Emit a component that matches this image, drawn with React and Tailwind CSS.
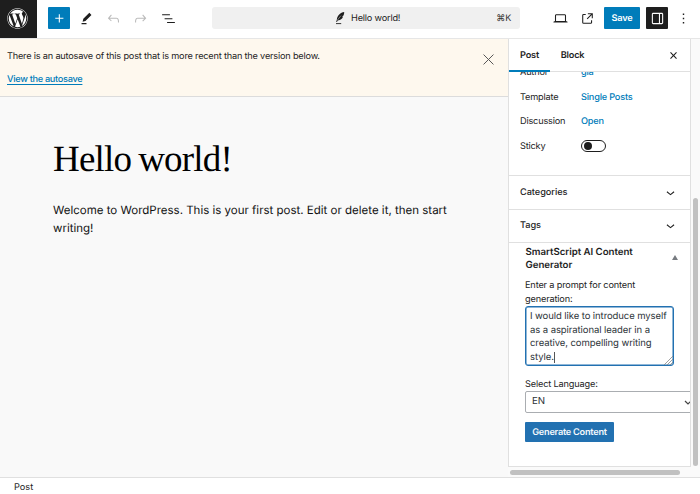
import React from "react";
import { FaWordpress } from "react-icons/fa";

const PATHS = {
  plus: "M11 12.5V17.5H12.5V12.5H17.5V11H12.5V6H11V11H6V12.5H11Z",
  edit: "m19 7-3-3-8.5 8.5-1 4 4-1L19 7Zm-7 11.5H5V20h7v-1.5Z",
  undo: "M18.3 11.7c-.6-.6-1.4-.9-2.3-.9H6.7l2.9-3.3-1.1-1-4.5 5L8.5 16l1-1-2.7-2.7H16c.5 0 .9.2 1.3.5 1 1 1 3.4 1 4.5v.3h1.5v-.2c0-1.5 0-4.3-1.5-5.7z",
  redo: "M15.6 6.5l-1.1 1 2.9 3.3H8c-.9 0-1.7.3-2.3.9-1.4 1.5-1.4 4.2-1.4 5.6v.2h1.5v-.3c0-1.1 0-3.5 1-4.5.3-.3.7-.5 1.3-.5h9.2L14.5 15l1.1 1.1 4.6-4.6-4.6-5z",
  list: "M3 6h11v1.5H3V6Zm3.5 5.5h11V13h-11v-1.5ZM21 17H10v1.5h11V17Z",
  external: "M19.5 4.5h-7V6h4.44l-5.97 5.97 1.06 1.06L18 7.06v4.44h1.5v-7Zm-13 1a2 2 0 0 0-2 2v10a2 2 0 0 0 2 2h10a2 2 0 0 0 2-2v-3H17v3a.5.5 0 0 1-.5.5h-10a.5.5 0 0 1-.5-.5v-10a.5.5 0 0 1 .5-.5h3V5.5h-3Z",
  desktop: "M20.5 16h-.7V8c0-1.1-.9-2-2-2H6.2c-1.1 0-2 .9-2 2v8h-.7c-.8 0-1.5.7-1.5 1.5h20c0-.8-.7-1.5-1.5-1.5zM5.7 8c0-.3.2-.5.5-.5h11.6c.3 0 .5.2.5.5v7.6H5.7V8z",
  drawer: "M18 4H6c-1.1 0-2 .9-2 2v12c0 1.1.9 2 2 2h12c1.1 0 2-.9 2-2V6c0-1.1-.9-2-2-2zm-4 14.5H6c-.3 0-.5-.2-.5-.5V6c0-.3.2-.5.5-.5h8v13zm4.5-.5c0 .3-.2.5-.5.5h-2.5v-13H18c.3 0 .5.2.5.5v12z",
  more: "M13 19h-2v-2h2v2zm0-6h-2v-2h2v2zm0-6h-2V5h2v2z",
  chevron: "M17.5 11.6L12 16l-5.5-4.4.9-1.2L12 14l4.5-3.6 1 1.2z",
  close: "M12 13.06l3.712 3.713 1.061-1.06L13.061 12l3.712-3.712-1.06-1.06L12 10.938 8.288 7.227l-1.061 1.06L10.939 12l-3.712 3.712 1.06 1.061L12 13.061z",
};

function Icon({ name, className = "" }) {
  return (
    <svg viewBox="0 0 24 24" fill="currentColor" fillRule="evenodd" className={"size-[17px] shrink-0 " + className}>
      <path d={PATHS[name]} />
    </svg>
  );
}

function Quill() {
  return (
    <svg viewBox="0 0 10 14" className="h-[14px] w-[10px] shrink-0">
      <path d="M9.2 1C5.5 1.6 2.2 4.6 1.9 8.2L1.2 11l.8.1.7-1.7C6 9.2 7.6 7.6 8 5.6L6.8 5.5 8.5 4.6C9 3.500 9.300 2.200 9.200 1Z" fill="#1e1e1e" />
      <path d="M2.2 9.300 6 4.600" stroke="#d5d5d5" strokeWidth=".5" />
      <path d="M1 12.600h5.200" stroke="#1e1e1e" strokeWidth=".9" />
    </svg>
  );
}

function Header() {
  return (
    <header className="flex h-[39px] shrink-0 border-b border-[#e6e6e6] bg-white">
      <div className="flex w-[37px] items-center justify-center bg-[#1e1e1e] text-white">
        <FaWordpress className="mb-[2px] -ml-[3px] size-[21px]" />
      </div>
      <div className="flex w-[175px] items-center pb-[2px] pl-[11px]">
        <div className="flex size-[22px] items-center justify-center rounded-[1px] bg-[#007cba] text-white">
          <Icon name="plus" />
        </div>
        <Icon name="edit" className="ml-[8px]" />
        <Icon name="undo" className="ml-[10px] text-[#bbb]" />
        <Icon name="redo" className="ml-[10px] text-[#bbb]" />
        <Icon name="list" className="ml-[11px]" />
      </div>
      <div className="mt-[7px] flex h-[22px] w-[308px] items-center rounded-[3px] bg-[#f0f0f0]">
        <div className="flex flex-1 items-center pl-[123px]">
          <Quill />
          <span className="ml-[6px] pt-px text-[9.200px]">Hello world!</span>
        </div>
        <span className="pr-[9px] pt-px text-[9px] text-[#2f2f2f]">⌘K</span>
      </div>
      <div className="flex flex-1 items-center pb-[2px] pl-[32px]">
        <Icon name="desktop" />
        <Icon name="external" className="ml-[10px]" />
        <div className="ml-[8px] flex h-[22px] w-[36px] items-center justify-center rounded-[1px] bg-[#007cba] pt-px text-[9.200px] font-semibold text-white">Save</div>
        <div className="ml-[6px] flex size-[22px] items-center justify-center rounded-[1px] bg-[#1e1e1e] text-white">
          <Icon name="drawer" />
        </div>
        <Icon name="more" className="ml-[7px]" />
      </div>
    </header>
  );
}

function Editor() {
  return (
    <main className="flex w-[508px] flex-col bg-[#f9f9f9]">
      <div className="flex h-[58px] justify-between border-b border-[#dcdcdc] bg-[#fef8ee] pl-[7px] pr-[11px]">
        <div className="pt-[11px] text-[9.200px] leading-[14px]">
          <p>There is an autosave of this post that is more recent than the version below.</p>
          <a className="mt-[9px] block font-medium tracking-[-0.300px] text-[#007cba] underline underline-offset-2">View the autosave</a>
        </div>
        <svg viewBox="0 0 10 10" className="mt-[15px] mr-[3px] size-[11px]">
          <path d="M.5.5l9 9M9.500.5l-9 9" stroke="#555" strokeWidth=".9" fill="none" />
        </svg>
      </div>
      <h1 className="mt-[40px] ml-[53px] whitespace-nowrap font-['Liberation_Serif',serif] text-[37px] leading-[46px] tracking-[-0.800px] text-black [word-spacing:-1.500px]">Hello world!</h1>
      <p className="mt-[18px] ml-[53px] text-[11.500px] leading-[18px] tracking-normal text-[#111]">
        Welcome to WordPress. This is your first post. Edit or delete it, then start
        <br />
        writing!
      </p>
    </main>
  );
}

function Row({ label, children }) {
  return (
    <div className="flex h-[24.500px] shrink-0 items-center pl-[11px]">
      <span className="w-[61px] pt-[2px]">{label}</span>
      <span className="pt-[2px] font-medium text-[#007cba]">{children}</span>
    </div>
  );
}

function Panel({ title }) {
  return (
    <div className="flex h-[33.500px] shrink-0 items-center justify-between border-t border-[#e0e0e0] pl-[11px] pr-[11px] font-medium tracking-[-0.050px]">
      <span className="pt-px">{title}</span>
      <Icon name="chevron" />
    </div>
  );
}

function Sidebar() {
  return (
    <aside className="flex h-[428px] w-[183px] flex-col overflow-hidden border-x border-b border-[#e0e0e0] bg-white text-[9.200px]">
      <div className="flex h-[33px] shrink-0 items-stretch border-b border-[#e0e0e0] font-semibold">
        <div className="-mb-px flex w-[41px] items-center justify-center border-b-2 border-b-[#007cba] pt-[2px]">Post</div>
        <div className="flex w-[45px] items-center justify-center pt-px">Block</div>
        <Icon name="close" className="mt-[8px] mr-[8px] ml-auto" />
      </div>
      <div className="flex h-[103px] shrink-0 flex-col justify-end overflow-hidden">
        <div className="flex h-[115px] shrink-0 flex-col">
          <Row label="Author">gia</Row>
          <Row label="Template">Single Posts</Row>
          <Row label="Discussion">Open</Row>
          <Row label="Sticky">
            <span className="-mt-[2px] flex h-[12px] w-[25px] items-center rounded-full border border-[#1e1e1e] pl-[2px]">
              <span className="size-[8px] rounded-full bg-[#1e1e1e]" />
            </span>
          </Row>
        </div>
      </div>
      <Panel title="Categories" />
      <Panel title="Tags" />
      <section className="flex-1 border-t border-[#e0e0e0] pl-[16px] tracking-[-0.160px]">
        <div className="flex items-center justify-between pt-[3px] pr-[12px]">
          <h2 className="pl-[0.500px] text-[9.700px] leading-[13px] font-semibold tracking-[-0.030px]">
            SmartScript AI Content
            <br />
            Generator
          </h2>
          <svg viewBox="0 0 6 5" className="mb-[4px] h-[5px] w-[6px]">
            <path d="M3 0 6 5H0Z" fill="#777b80" />
          </svg>
        </div>
        <p className="mt-[7px] leading-[14px]">
          Enter a prompt for content
          <br />
          generation:
        </p>
        <div className="relative -mt-px h-[60px] w-[149px] rounded-[3px] border border-[#2271b1] bg-white pt-[3px] pl-[4px] text-[9.500px] leading-[13.700px] tracking-[-0.080px] whitespace-nowrap text-[#2c3338] ring-[0.500px] ring-[#2271b1] ring-inset">
          I would like to introduce myself
          <br />
          as a aspirational leader in a
          <br />
          creative, compelling writing
          <br />
          style.
          <span className="inline-block h-[11px] w-px bg-[#555] align-middle" />
          <svg viewBox="0 0 9 9" className="absolute right-0 bottom-0 size-[9px]">
            <path d="M0 9 9 0M3 9 9 3M6 9 9 6" stroke="#888" strokeWidth=".8" />
          </svg>
        </div>
        <p className="mt-[12px] leading-[14px]">Select Language:</p>
        <div className="-mt-px flex h-[22px] w-[176px] items-center justify-between rounded-[2px] border border-[#aaadb1] pr-[8px] pl-[6px] text-[9.700px] text-[#2c3338]">
          <span className="pt-px">EN</span>
          <svg viewBox="0 0 8 5" className="h-[5px] w-[8px]">
            <path d="m1 1 3 3 3-3" stroke="#444" strokeWidth="1.200" fill="none" />
          </svg>
        </div>
        <div className="mt-[9px] flex h-[20px] w-[89px] items-center justify-center rounded-[1px] bg-[#2271b1] pt-px font-semibold tracking-[-0.250px] text-[#f4f8fc]">Generate Content</div>
      </section>
    </aside>
  );
}

export default function App() {
  return (
    <div className="flex h-[494px] w-[700px] flex-col overflow-hidden bg-white font-['Inter',sans-serif] tracking-[-0.200px] text-[#1e1e1e] [text-rendering:geometricPrecision]">
      <Header />
      <div className="flex h-[438px] shrink-0">
        <Editor />
        <div className="flex w-[192px] flex-col bg-[#fafafa]">
          <div className="flex">
            <Sidebar />
            <div className="mt-[159px] ml-[2px] h-[268px] w-[5px] rounded-full bg-[#c1c1c1]" />
          </div>
          <div className="mt-[3px] ml-[2px] h-[5px] w-[170px] rounded-full bg-[#c1c1c1]" />
        </div>
      </div>
      <footer className="flex flex-1 items-center border-t border-[#e0e0e0] pt-[3px] pl-[14px] text-[9.200px] tracking-normal">Post</footer>
    </div>
  );
}
